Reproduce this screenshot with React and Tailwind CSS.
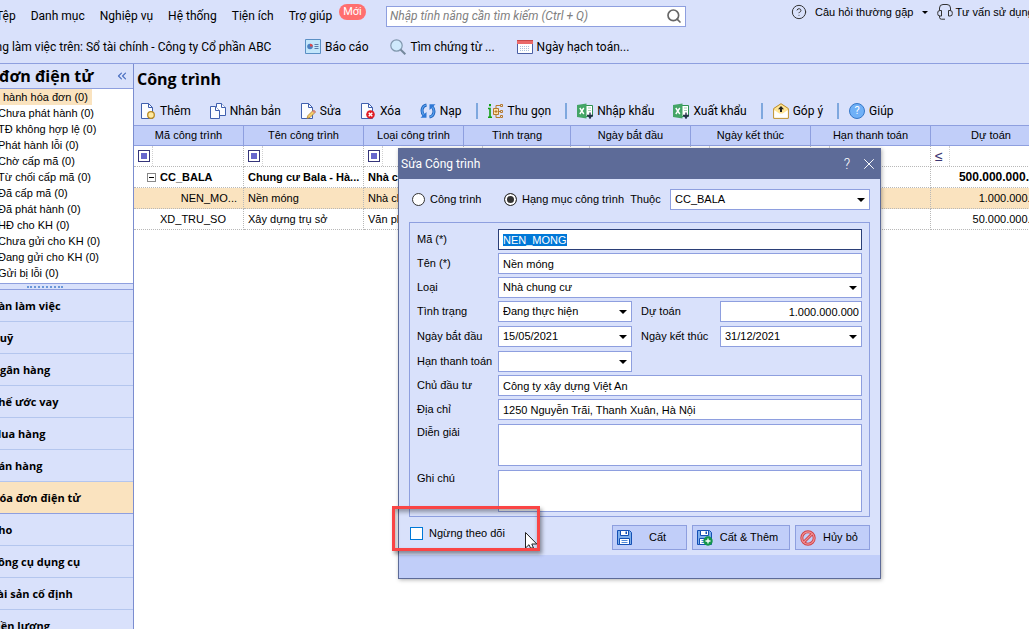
import { ChevronsLeft, CircleHelp, Search, X } from 'lucide-react';

const menuItems = ['Tệp', 'Danh mục', 'Nghiệp vụ', 'Hệ thống', 'Tiện ích', 'Trợ giúp'];

const invoiceFilters = [
  'Chưa phát hành (0)',
  'TĐ không hợp lệ (0)',
  'Phát hành lỗi (0)',
  'Chờ cấp mã (0)',
  'Từ chối cấp mã (0)',
  'Đã cấp mã (0)',
  'Đã phát hành (0)',
  'HĐ cho KH (0)',
  'Chưa gửi cho KH (0)',
  'Đang gửi cho KH (0)',
  'Gửi bị lỗi (0)',
];

const modules = [
  'Bàn làm việc',
  'Quỹ',
  'Ngân hàng',
  'Khế ước vay',
  'Mua hàng',
  'Bán hàng',
  'Hóa đơn điện tử',
  'Kho',
  'Công cụ dụng cụ',
  'Tài sản cố định',
  'Tiền lương',
];

const columns = [
  'Mã công trình',
  'Tên công trình',
  'Loại công trình',
  'Tình trạng',
  'Ngày bắt đầu',
  'Ngày kết thúc',
  'Hạn thanh toán',
  'Dự toán',
];

const Page = ({ children }) => (
  <svg className="size-4 shrink-0" viewBox="0 0 16 16" fill="none">
    <path d="M1.500 .5h7l4 4v11h-11z" fill="#fbfcff" stroke="#3f5fae" />
    <path d="M8.500 .5v4h4" stroke="#3f5fae" />
    {children}
  </svg>
);

const AddIcon = () => (
  <Page>
    <circle cx="11" cy="12" r="3.300" fill="#ffe9a0" stroke="#b98a22" strokeWidth="1.300" />
  </Page>
);

const CopyIcon = () => (
  <svg className="size-4 shrink-0" viewBox="0 0 16 16" fill="#fbfcff" stroke="#3f5fae">
    <path d="M6.500 .5h5l4 4v8h-9z" />
    <path d="M11.500 .5v4h4" />
    <path d="M.5 3.500h5l4 4v8h-9z" />
    <path d="M5.500 3.500v4h4" />
  </svg>
);

const EditIcon = () => (
  <Page>
    <path d="M7 15.500l1-3 5.500-5.500 2 2-5.500 5.500z" fill="#f6cf6b" stroke="#a87b2c" strokeWidth=".8" />
    <path d="M12.300 8.200l2 2 1.400-1.400-2-2z" fill="#d98080" />
  </Page>
);

const DeleteIcon = () => (
  <Page>
    <circle cx="10.500" cy="11.500" r="4.300" fill="#e01b24" />
    <path d="M8.700 9.700l3.600 3.600M12.300 9.700l-3.600 3.600" stroke="#fff" strokeWidth="1.400" />
  </Page>
);

const ReloadIcon = () => (
  <svg className="size-4 shrink-0" viewBox="0 0 16 16" fill="none">
    <path d="M6.500 2C1.500 3 .8 9 4 12.500M9.500 14c5-1 5.700-7 2.500-10.500" stroke="#1f62bd" strokeWidth="3" />
    <path d="M6.500 2C1.500 3 .8 9 4 12.500M9.500 14c5-1 5.700-7 2.500-10.500" stroke="#5aa2ee" strokeWidth="1.200" />
    <path d="M.5 14.800h6V9z" fill="#2f78d6" />
    <path d="M15.500 1.200h-6V7z" fill="#2f78d6" />
  </svg>
);

const CollapseIcon = () => (
  <svg className="size-4 shrink-0" viewBox="0 0 16 16" fill="none">
    <path d="M0 5.500h2v8.500M0 14.200h4" stroke="#12a012" strokeWidth="1.600" />
    <path d="M1 1h2v2.200H1z" fill="#12a012" />
    <path d="M5.500 5.500h5v6h-5z" fill="#ffe2a8" stroke="#b67a2c" />
    <path d="M6.500 8.500h3M8 7v3M8 5V2.500h4M8 12v2.500h4M10.500 8.500H13" stroke="#b67a2c" />
    <path d="M12.500 1.500h2v2h-2zM12.500 7.500h2v2h-2zM12.500 12.500h2v2h-2z" stroke="#b67a2c" />
  </svg>
);

const ExcelIcon = () => (
  <svg className="size-4 shrink-0" viewBox="0 0 16 16" fill="none">
    <path d="M8 2.500h7.500v11H8z" fill="#fff" stroke="#2f9152" />
    <path d="M11 5h3M11 7.500h3" stroke="#a5cdb3" />
    <path d="M0 2l9.500-1.500v15L0 14z" fill="#44a566" />
    <path d="M2.800 5l4 6M6.800 5l-4 6" stroke="#fff" strokeWidth="1.400" />
    <path d="M13 9.500v6M10 12.500h6" stroke="#26324a" strokeWidth="1.400" />
    <path d="M10.800 13h4.400L13 16z" fill="#26324a" />
  </svg>
);

const FeedbackIcon = () => (
  <svg className="size-4 shrink-0" viewBox="0 0 16 16">
    <path d="M.7 5.500L8 .7l7.300 4.800v9.800H.7z" fill="#ffe596" stroke="#bd8a1f" />
    <path d="M1.200 7l5 3.500h3.600l5-3.500v7.800H1.200z" fill="#fff" />
    <path d="M8 3l3 3.200H9V9H7V6.200H5z" fill="#222" />
  </svg>
);

const HelpIcon = () => (
  <span className="flex size-4 shrink-0 items-center justify-center rounded-full border border-[#3577c8] bg-[#6fb0f7] text-[11px] text-white">
    ?
  </span>
);

const ReportIcon = () => (
  <svg className="size-4 shrink-0" viewBox="0 0 16 16">
    <path d="M.5 .5h15v14H.5z" fill="#c3e6fb" stroke="#5a8fc4" />
    <circle cx="5" cy="7.500" r="2.800" fill="#4c7fc0" />
    <path d="M5 7.500V4.700a2.800 2.800 0 0 1 2.800 2.800z" fill="#e04848" />
    <path d="M9.500 5.500h4M9.500 7.500h4M9.500 9.500h4" stroke="#5a7ba8" />
  </svg>
);

const FindIcon = () => (
  <svg className="size-4 shrink-0" viewBox="0 0 16 16" fill="none">
    <circle cx="6.500" cy="6.500" r="5.700" fill="#cfeafc" stroke="#8298ae" strokeWidth="1.200" />
    <path d="M10.500 10.500l4.800 4.800" stroke="#74889c" strokeWidth="2" />
  </svg>
);

const CalendarIcon = () => (
  <svg className="size-4 shrink-0" viewBox="0 0 16 16" fill="none">
    <path d="M.5 1.500h15v13H.5z" fill="#fff" stroke="#4a5fa5" />
    <path d="M0 1h16v4H0z" fill="#ea6a6a" />
    <path d="M0 1.500h16" stroke="#c94848" />
    <path d="M3 7.500h10M3 9.500h10M3 11.500h10" stroke="#a9c0dc" strokeDasharray="1 1" />
  </svg>
);

const HeadsetIcon = () => (
  <svg className="size-4 shrink-0" viewBox="0 0 16 16" fill="none" stroke="#333">
    <path d="M2.500 6.500V4a3.500 3.500 0 0 1 3.500-3.500h4A3.500 3.500 0 0 1 13.500 4v2.500" />
    <path d="M4.500 6.500v5.500H3A2.300 2.300 0 0 1 .7 9.500V9A2.300 2.300 0 0 1 3 6.500z" />
    <path d="M11.500 6.500v5.500H13a2.300 2.300 0 0 0 2.300-2.500V9A2.300 2.300 0 0 0 13 6.500z" />
    <path d="M2.500 12v1.200a2 2 0 0 0 2 2H8" />
  </svg>
);

const SaveIcon = ({ plus }) => (
  <svg className="size-4 shrink-0" viewBox="0 0 16 16">
    <path d="M.5 .5h12l2 2v12H.5z" fill="#7eaeea" stroke="#1450b4" />
    <path d="M3.500 .5h8v5h-8z" fill="#fff" stroke="#1450b4" />
    <path d="M8.500 1.500h1.500v2.500H8.500z" fill="#1450b4" />
    <path d="M2.500 8.500h10v6h-10z" fill="#fff" stroke="#1450b4" />
    <path d="M4.500 10.500h6M4.500 12.500h6" stroke="#5088d8" />
    {plus && (
      <>
        <circle cx="11" cy="11" r="4.700" fill="#14964a" />
        <path d="M11 8.500v5M8.500 11h5" stroke="#fff" strokeWidth="1.300" />
      </>
    )}
  </svg>
);

const CancelIcon = () => (
  <svg className="size-4 shrink-0" viewBox="0 0 16 16" fill="none">
    <circle cx="8" cy="8" r="6.200" stroke="#cf4046" strokeWidth="3" />
    <path d="M3.800 12.200l8.400-8.400" stroke="#cf4046" strokeWidth="3" />
    <circle cx="8" cy="8" r="6.200" stroke="#f29296" strokeWidth="1.200" />
    <path d="M3.800 12.200l8.400-8.400" stroke="#f29296" strokeWidth="1.200" />
  </svg>
);

const Arrow = () => (
  <svg className="h-1 w-2 shrink-0" viewBox="0 0 8 4">
    <path d="M0 0h8L4 4z" fill="#000" />
  </svg>
);

const ToolButton = ({ icon, children }) => (
  <button type="button" className="flex shrink-0 items-center gap-1 whitespace-nowrap">
    {icon}
    {children}
  </button>
);

const Separator = () => <span className="-ml-[5px] -mr-[9px] h-4 w-0.5 shrink-0 bg-[#7fa8de]" />;

const Select = ({ id, options, className = '' }) => (
  <div className={`relative ${className}`}>
    <select
      id={id}
      className="block h-[21px] w-full appearance-none border border-[#8e9fdf] bg-white px-1 outline-none"
    >
      {options.map((option) => (
        <option key={option}>{option}</option>
      ))}
    </select>
    <span className="pointer-events-none absolute inset-y-0 right-[5px] flex items-center">
      <Arrow />
    </span>
  </div>
);

const TextRow = ({ id, label, value, focused }) => (
  <div className="flex items-center">
    <label htmlFor={id} className="w-[81px] shrink-0">{label}</label>
    <input
      id={id}
      type="text"
      defaultValue={value}
      autoFocus={focused}
      onFocus={focused ? (e) => e.target.select() : undefined}
      className="h-[21px] min-w-0 flex-1 border border-[#8e9fdf] bg-white px-1 outline-none selection:bg-[#0078d7] selection:text-white focus:border-[#2b3f78]"
    />
  </div>
);

const AreaRow = ({ id, label }) => (
  <div className="flex items-start">
    <label htmlFor={id} className="w-[81px] shrink-0">{label}</label>
    <textarea
      id={id}
      className="block h-[42px] min-w-0 flex-1 resize-none border border-[#8e9fdf] bg-white px-1 outline-none"
    />
  </div>
);

const TopBar = () => (
  <header className="h-16 shrink-0 overflow-hidden border-b border-[#8e9fdf]">
    <div className="flex h-8 items-center whitespace-nowrap">
      <nav className="-ml-1 flex w-[390px] shrink-0 items-center gap-[15px]">
        {menuItems.map((item) => (
          <button key={item} type="button">{item}</button>
        ))}
        <span className="-ml-2 mb-2 rounded-full bg-[#ff6f6f] px-1 text-[11px] leading-4 text-white">
          Mới
        </span>
      </nav>
      <div className="flex h-[21px] w-[300px] shrink-0 items-center border border-[#8e9fdf] bg-white pr-[3px] pl-[3px]">
        <input
          type="search"
          aria-label="Tìm kiếm tính năng"
          placeholder="Nhập tính năng cần tìm kiếm (Ctrl + Q)"
          className="min-w-0 flex-1 italic outline-none placeholder:text-[#808080]"
        />
        <Search className="size-4 shrink-0 text-[#666]" strokeWidth={2.5} />
      </div>
      <div className="ml-[105px] flex shrink-0 items-center pb-2 font-['Liberation_Sans',Arial,sans-serif] text-[11px]">
        <CircleHelp className="size-4 text-[#333]" strokeWidth={1.5} />
        <button type="button" className="ml-2 flex items-center gap-[9px]">
          Câu hỏi thường gặp
          <svg className="h-[3px] w-1.5" viewBox="0 0 6 3">
            <path d="M0 0h6L3 3z" />
          </svg>
        </button>
        <span className="mr-0.5 ml-[9px]">
          <HeadsetIcon />
        </span>
        <button type="button">Tư vấn sử dụng</button>
      </div>
    </div>
    <div className="flex h-[30px] items-center whitespace-nowrap">
      <span className="-ml-[19px] w-[324px] shrink-0">
        Đang làm việc trên: Sổ tài chính - Công ty Cổ phần ABC
      </span>
      <div className="flex gap-[22px]">
        <ToolButton icon={<ReportIcon />}>Báo cáo</ToolButton>
        <ToolButton icon={<FindIcon />}>Tìm chứng từ ...</ToolButton>
        <ToolButton icon={<CalendarIcon />}>Ngày hạch toán...</ToolButton>
      </div>
    </div>
  </header>
);

const Sidebar = () => (
  <aside className="flex w-[134px] shrink-0 flex-col overflow-hidden border-r border-[#7b8dd0]">
    <div className="flex h-[25px] shrink-0 items-center justify-between border-b border-[#8e9fdf] pr-1">
      <h2 className="-ml-px font-['Open_Sans',sans-serif] text-[16px] leading-6 font-bold whitespace-nowrap">đơn điện tử</h2>
      <button type="button" aria-label="Thu gọn danh sách">
        <ChevronsLeft className="size-3.5 text-[#4a6fc0]" strokeWidth={2} />
      </button>
    </div>
    <ul className="shrink-0 bg-white pb-0.5 font-['Liberation_Sans',Arial,sans-serif] text-[11px] leading-4 whitespace-nowrap">
      <li className="w-[92px] bg-[#fae3bf] pl-[3px]">hành hóa đơn (0)</li>
      {invoiceFilters.map((item) => (
        <li key={item} className="-ml-0.5">{item}</li>
      ))}
    </ul>
    <div className="flex h-[7px] shrink-0 items-center border-y border-[#8e9fdf] pl-[27px]">
      <span className="w-9 border-t-2 border-dotted border-[#6a97d8]" />
    </div>
    <ul className="font-['Open_Sans',sans-serif] text-[11px] font-bold whitespace-nowrap">
      {modules.map((item) => (
        <li
          key={item}
          className={`h-8 border-b ${
            item === 'Hóa đơn điện tử' ? 'border-[#8e9fdf] bg-[#fae3bf]' : 'border-[#b4c6ee]'
          }`}
        >
          <a href="#" className="-ml-[9px] block leading-8">{item}</a>
        </li>
      ))}
    </ul>
  </aside>
);

const cell = 'h-[21px] truncate border-r border-b border-dotted border-[#b8b8b8] pr-0.5 pl-1 leading-5';

const ProjectTable = () => (
  <table className="w-[918px] table-fixed border-separate border-spacing-0 font-['Liberation_Sans',Arial,sans-serif] text-[11px]">
    <colgroup>
      <col className="w-[110px]" />
      <col className="w-[120px]" />
      <col className="w-[100px]" />
      <col className="w-[107px]" />
      <col className="w-[120px]" />
      <col className="w-[120px]" />
      <col className="w-[120px]" />
      <col className="w-[121px]" />
    </colgroup>
    <thead>
      <tr className="bg-[#c1cef9]">
        {columns.map((name) => (
          <th key={name} scope="col" className="h-[21px] border-y border-r border-[#8e9fdf] font-normal">
            {name}
          </th>
        ))}
      </tr>
    </thead>
    <tbody>
      <tr>
        {columns.map((name) => (
          <td key={name} className="h-[21px] border-r border-b border-dotted border-[#b8b8b8]">
            <span className="flex h-5 w-[19px] items-center justify-end border-r border-dotted border-[#d0d0d0] pr-0.5">
              {name === 'Dự toán' ? (
                <span className="w-3 text-[14px] text-[#3a3470]">≤</span>
              ) : (
                <span className="flex size-3 items-center justify-center border border-[#35357a]">
                  <span className="size-1.5 bg-[#6666cc]" />
                </span>
              )}
            </span>
          </td>
        ))}
      </tr>
      <tr className="font-bold">
        <td className={cell}>
          <span className="flex items-center gap-1 pl-[9px] text-[11px]">
            <button
              type="button"
              aria-label="Thu gọn"
              className="flex size-[9px] items-center justify-center border border-[#888]"
            >
              <span className="h-px w-[5px] bg-black" />
            </button>
            CC_BALA
          </span>
        </td>
        <td className="h-[21px] overflow-hidden border-r border-b border-dotted border-[#b8b8b8] pl-1 leading-5 whitespace-nowrap">
          Chung cư Bala - Hà...
        </td>
        <td className={cell}>Nhà chung cư</td>
        <td className={cell} />
        <td className={cell} />
        <td className={cell} />
        <td className={cell} />
        <td className={`${cell} text-right text-[12px]`}>500.000.000.000</td>
      </tr>
      <tr className="bg-[#fae3bf]">
        <td className={`${cell} text-right`}>
          <span className="pr-1">NEN_MO...</span>
        </td>
        <td className={cell}>Nền móng</td>
        <td className={cell}>Nhà chung cư</td>
        <td className={cell} />
        <td className={cell} />
        <td className={cell} />
        <td className={cell} />
        <td className={`${cell} text-right`}>1.000.000.000</td>
      </tr>
      <tr>
        <td className={cell}>
          <span className="pl-[22px]">XD_TRU_SO</span>
        </td>
        <td className={cell}>Xây dựng trụ sở</td>
        <td className={cell}>Văn phòng</td>
        <td className={cell} />
        <td className={cell} />
        <td className={cell} />
        <td className={cell} />
        <td className={`${cell} text-right`}>50.000.000.000</td>
      </tr>
    </tbody>
  </table>
);

const radio =
  'size-[13px] appearance-none rounded-full border border-[#333] bg-white checked:bg-[#333] checked:shadow-[inset_0_0_0_2px_#fff]';
const action = 'flex h-[25px] items-center border border-[#8e9fdf] bg-[#c1cef9] px-1';

const EditDialog = () => (
  <div
    role="dialog"
    aria-label="Sửa Công trình"
    className="absolute top-[148px] left-[398px] w-[483px] border border-[#5d6b98] bg-[#d9e1fb] font-['Liberation_Sans',Arial,sans-serif] text-[11px] shadow-[1px_1px_4px_rgba(0,0,0,0.3)]"
  >
    <div className="flex h-[30px] items-center bg-[#5d6b98] px-0.5 font-[Roboto,sans-serif] text-[12px] text-white">
      <h2 className="flex-1">Sửa Công trình</h2>
      <button type="button" aria-label="Trợ giúp" className="mr-2.5 text-[14px] font-light">?</button>
      <button type="button" aria-label="Đóng">
        <X className="size-[18px]" strokeWidth={1.3} />
      </button>
    </div>

    <form onSubmit={(e) => e.preventDefault()}>
      <div className="flex items-center pt-[10px] pr-[10px] pl-[13px]">
        <label className="flex w-[92px] items-center gap-[5px]">
          <input type="radio" name="level" className={radio} />
          Công trình
        </label>
        <label className="flex items-center gap-[5px]">
          <input type="radio" name="level" defaultChecked className={radio} />
          Hạng mục công trình
        </label>
        <label htmlFor="parent" className="flex-1 pl-[6px]">Thuộc</label>
        <Select id="parent" options={['CC_BALA', 'XD_TRU_SO']} className="w-[200px]" />
      </div>

      <div className="mx-[10px] mt-3 border border-[#8e9fdf] pt-1.5 pr-[7px] pb-1 pl-[7px]">
        <div className="flex flex-col gap-[3px]">
          <TextRow id="code" label="Mã (*)" value="NEN_MONG" focused />
          <TextRow id="name" label="Tên (*)" value="Nền móng" />
          <div className="flex items-center">
            <label htmlFor="kind" className="w-[81px] shrink-0">Loại</label>
            <Select id="kind" options={['Nhà chung cư', 'Văn phòng']} className="flex-1" />
          </div>
        </div>
        <div className="mt-[3px] grid grid-cols-[81px_134px_88px_1fr] items-center gap-y-1">
          <label htmlFor="status">Tình trạng</label>
          <Select id="status" options={['Đang thực hiện', 'Hoàn thành']} />
          <label htmlFor="budget" className="pl-[9px]">Dự toán</label>
          <input
            id="budget"
            type="text"
            defaultValue="1.000.000.000"
            className="h-[21px] w-full border border-[#8e9fdf] bg-white px-0.5 text-right outline-none"
          />
          <label htmlFor="start">Ngày bắt đầu</label>
          <Select id="start" options={['15/05/2021']} />
          <label htmlFor="end" className="pl-[9px]">Ngày kết thúc</label>
          <Select id="end" options={['31/12/2021']} />
          <label htmlFor="due">Hạn thanh toán</label>
          <Select id="due" options={['']} />
        </div>
        <div className="mt-[3px] flex flex-col gap-[3px]">
          <TextRow id="owner" label="Chủ đầu tư" value="Công ty xây dựng Việt An" />
          <TextRow id="address" label="Địa chỉ" value="1250 Nguyễn Trãi, Thanh Xuân, Hà Nội" />
        </div>
        <div className="mt-1 flex flex-col gap-1">
          <AreaRow id="description" label="Diễn giải" />
          <AreaRow id="note" label="Ghi chú" />
        </div>
      </div>

      <div className="flex items-center gap-[5px] pt-[8px] pr-[10px] pb-[5px] pl-[11px]">
        <label className="mb-2 flex flex-1 items-center gap-1.5">
          <input type="checkbox" className="size-[13px] appearance-none border border-[#0078d7] bg-white" />
          Ngừng theo dõi
        </label>
        <button type="submit" className={`${action} w-[75px]`}>
          <SaveIcon />
          <span className="flex-1">Cất</span>
        </button>
        <button type="button" className={`${action} w-[98px]`}>
          <SaveIcon plus />
          <span className="flex-1">Cất &amp; Thêm</span>
        </button>
        <button type="button" className={`${action} w-[75px]`}>
          <CancelIcon />
          <span className="flex-1">Hủy bỏ</span>
        </button>
      </div>
      <div className="h-[23px] bg-[#c1cef9]" />
    </form>

    {/* highlight frame with the pointer inside it */}
    <div className="pointer-events-none absolute top-[357px] -left-[7px] flex h-[45px] w-[148px] items-end justify-end overflow-hidden border-[3px] border-[#fa4545] shadow-[2px_3px_4px_rgba(0,0,0,0.4),inset_1px_3px_4px_rgba(0,0,0,0.35)]">
      <svg className="h-4 w-3" viewBox="0 0 12 16">
        <path d="M.5 .5v15.500l3.500-3.300 1.500 3.300h3l-1.700-4h5z" fill="#fff" stroke="#222" />
      </svg>
    </div>
  </div>
);

const App = () => (
  <div className="relative flex h-screen flex-col overflow-hidden bg-[#d9e1fb] font-[Roboto,sans-serif] text-[12px] text-black">
    <TopBar />
    <div className="flex min-h-0 flex-1">
      <Sidebar />
      <main className="flex min-w-0 flex-1 flex-col overflow-hidden">
        <h1 className="px-[3px] pt-[3px] font-['Open_Sans',sans-serif] text-[16px] leading-6 font-bold">Công trình</h1>
        <div className="flex h-[34px] shrink-0 items-center gap-[19px] px-1.5 pt-1.5">
          <ToolButton icon={<AddIcon />}>Thêm</ToolButton>
          <ToolButton icon={<CopyIcon />}>Nhân bản</ToolButton>
          <ToolButton icon={<EditIcon />}>Sửa</ToolButton>
          <ToolButton icon={<DeleteIcon />}>Xóa</ToolButton>
          <ToolButton icon={<ReloadIcon />}>Nạp</ToolButton>
          <Separator />
          <ToolButton icon={<CollapseIcon />}>Thu gọn</ToolButton>
          <Separator />
          <ToolButton icon={<ExcelIcon />}>Nhập khẩu</ToolButton>
          <ToolButton icon={<ExcelIcon />}>Xuất khẩu</ToolButton>
          <Separator />
          <ToolButton icon={<FeedbackIcon />}>Góp ý</ToolButton>
          <Separator />
          <ToolButton icon={<HelpIcon />}>Giúp</ToolButton>
        </div>
        <div className="flex-1 bg-white">
          <ProjectTable />
        </div>
      </main>
    </div>
    <EditDialog />
  </div>
);

export default App;
